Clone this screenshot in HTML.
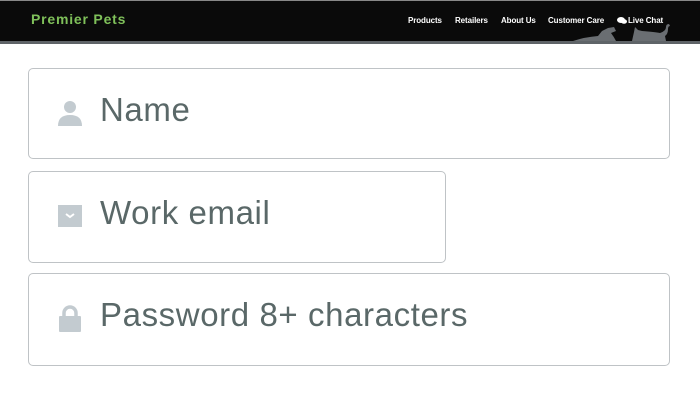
<!DOCTYPE html>
<html><head><meta charset="utf-8"><style>
*{margin:0;padding:0;box-sizing:border-box}
body{width:700px;height:400px;background:#fff;font-family:"Liberation Sans",sans-serif;position:relative;overflow:hidden}
.hdr{position:absolute;left:0;top:0;width:700px;height:41px;background:#0a0a0a;border-top:1px solid #888}
.bar{position:absolute;left:0;top:41px;width:700px;height:3px;background:#5f6468}
.logo{position:absolute;left:31px;top:11px;color:#7fc05a;font-weight:bold;font-size:14px;letter-spacing:0.8px}
.nav{position:absolute;top:16px;color:#fff;font-weight:bold;font-size:8px;letter-spacing:-0.1px}
.box{position:absolute;border:1.5px solid #bfc3c6;border-radius:5px;background:#fff}
.lbl{position:absolute;left:100px;color:#5a6868;font-size:33px;letter-spacing:0.6px}
</style></head><body>
<div class="hdr"></div>
<div class="bar"></div>
<div class="logo">Premier Pets</div>
<div class="nav" style="left:408px">Products</div>
<div class="nav" style="left:455px">Retailers</div>
<div class="nav" style="left:501px">About Us</div>
<div class="nav" style="left:548px">Customer Care</div>
<svg style="position:absolute;left:617px;top:17px" width="10" height="7"><ellipse cx="4" cy="3" rx="4" ry="3" fill="#fff"/><ellipse cx="7" cy="4.5" rx="3" ry="2.3" fill="#fff"/></svg>
<div class="nav" style="left:628px">Live Chat</div>
<svg style="position:absolute;left:570px;top:22px" width="130" height="20">
<path d="M3 19 Q15 15 28 14 L32 9 L38 6 L44 5 L46 9 L41 11 Q44 15 46 19 Z" fill="#6a6e72"/>
<path d="M62 19 L64 10 L65 5 L68 8 L72 9 Q85 10 90 11 Q96 9 96 5 Q96 2 99 2 L100 4 Q98 4 98 7 Q98 12 95 14 L96 19 Z" fill="#6a6e72"/>
</svg>
<div class="box" style="left:28px;top:68px;width:642px;height:91px"></div>
<div class="box" style="left:28px;top:171px;width:418px;height:92px"></div>
<div class="box" style="left:28px;top:273px;width:642px;height:93px"></div>
<svg style="position:absolute;left:57px;top:98px" width="26" height="30"><circle cx="13" cy="9" r="6" fill="#c3cbd0"/><path d="M1 28 Q1 17 13 17 Q25 17 25 28 Z" fill="#c3cbd0"/></svg>
<svg style="position:absolute;left:57px;top:204px" width="26" height="24"><rect x="1" y="1" width="24" height="22" fill="#c3cbd0"/><path d="M9 10 L13 13 L17 10" stroke="#fff" stroke-width="2" fill="none"/></svg>
<svg style="position:absolute;left:58px;top:303px" width="24" height="30"><path d="M6 14 V10 A6 6 0 0 1 18 10 V14" stroke="#c3cbd0" stroke-width="3.5" fill="none"/><rect x="1" y="13" width="22" height="16" rx="1" fill="#c3cbd0"/></svg>
<div class="lbl" style="top:91px">Name</div>
<div class="lbl" style="top:194px">Work email</div>
<div class="lbl" style="top:296px">Password 8+ characters</div>
</body></html>
